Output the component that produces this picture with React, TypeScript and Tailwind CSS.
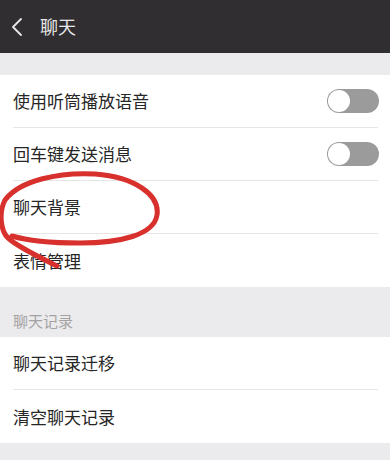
const groupOne = [
  { label: '使用听筒播放语音', toggle: true },
  { label: '回车键发送消息', toggle: true },
  { label: '聊天背景', toggle: false },
  { label: '表情管理', toggle: false },
];
const groupTwo = ['聊天记录迁移', '清空聊天记录'];

function Toggle() {
  return (
    <div className="-mr-[1px] flex h-[24px] w-[52px] items-center rounded-full bg-[#9b9b9b] p-[1px]">
      <div className="h-[22px] w-[22px] rounded-full bg-white" />
    </div>
  );
}

function Row({ label, toggle, last }: { label: string; toggle?: boolean; last?: boolean }) {
  return (
    <div className="pl-[13px] pr-[12px]">
      <div className={'flex h-[53px] items-center justify-between' + (last ? '' : ' border-b border-[#e6e6e6]')}>
        <span className="text-[17px] text-[#262626]">{label}</span>
        {toggle && <Toggle />}
      </div>
    </div>
  );
}

export default function App() {
  return (
    <div
      className="relative h-[460px] w-[390px] overflow-hidden bg-[#ebeaec]"
      style={{ fontFamily: '"Noto Sans CJK SC", "Noto Sans", sans-serif' }}
    >
      <header className="flex h-[53px] items-center bg-[#302e31] pl-[11px]">
        <svg width="12" height="20" viewBox="0 0 12 20" fill="none">
          <polyline points="10,2 2,10 10,18" stroke="#e6e6e6" strokeWidth="1.8" strokeLinecap="round" strokeLinejoin="round" />
        </svg>
        <span className="ml-[17px] text-[18px] text-[#e8e8e8]">聊天</span>
      </header>

      <div className="mt-[22px] bg-white">
        {groupOne.map((r, i) => (
          <Row key={r.label} label={r.label} toggle={r.toggle} last={i === groupOne.length - 1} />
        ))}
      </div>

      <div className="flex h-[50px] items-end pb-[5px] pl-[13px] text-[15px] text-[#a3a3a3]">聊天记录</div>

      <div className="bg-white">
        {groupTwo.map((l, i) => (
          <Row key={l} label={l} last={i === groupTwo.length - 1} />
        ))}
      </div>

      <svg className="pointer-events-none absolute left-0 top-0" width="390" height="460" fill="none">
        <path
          d="M 57 266 C 35 255, 15 245, 8 238 C 0 230, -1 212, 5 200 C 20 180, 60 172, 95 174 C 135 177, 160 195, 157 215 C 154 235, 120 243, 80 243 C 50 243, 25 240, 12 236"
          stroke="#d8302c"
          strokeWidth="5"
          strokeLinecap="round"
          strokeLinejoin="round"
        />
      </svg>
    </div>
  );
}
